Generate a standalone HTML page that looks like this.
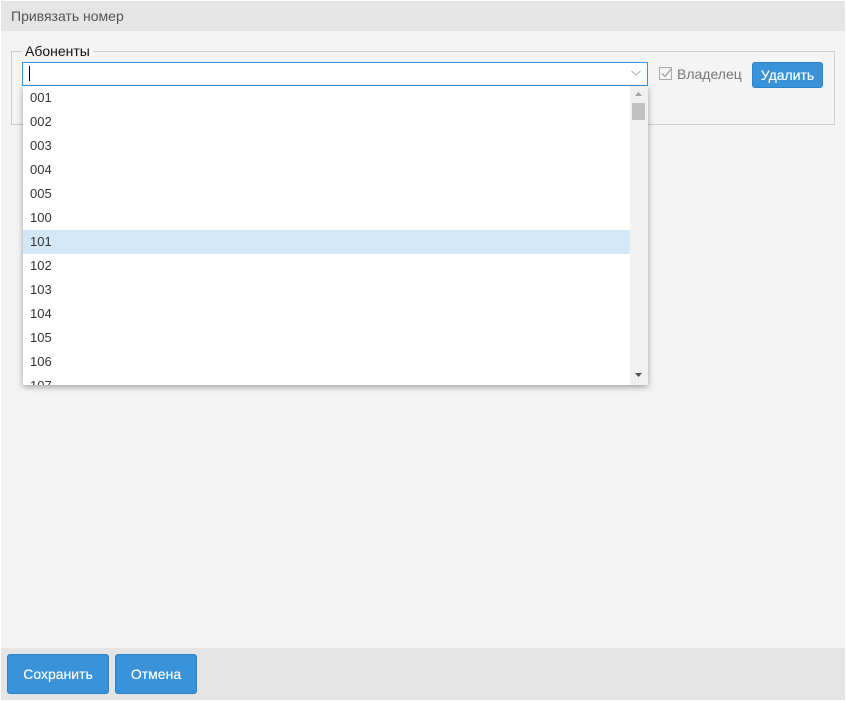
<!DOCTYPE html>
<html><head><meta charset="utf-8">
<style>
html,body{margin:0;padding:0;background:#fff;width:846px;height:701px;overflow:hidden;font-family:"Liberation Sans",sans-serif}
div,span,button{position:absolute;box-sizing:border-box}
#main{left:1px;top:1px;width:844px;height:699px;background:#f4f4f4}
#head{left:1px;top:1px;width:844px;height:30px;background:#e5e5e5;color:#555;font-size:14px;line-height:31px;padding-left:10px}
#fs{left:11px;top:51px;width:824px;height:74px;border:1px solid #ccc}
#leg{left:22px;top:43px;padding:0 3px;background:#f4f4f4;font-size:14px;line-height:16px;color:#111;height:16px}
#inp{left:22px;top:62px;width:626px;height:24px;border:1px solid #3a93d8;background:#fff}
#caret{left:29px;top:66px;width:1px;height:15px;background:#000}
#list{left:23px;top:86px;width:625px;height:299px;background:#fff;overflow:hidden;box-shadow:0 2px 6px rgba(0,0,0,.35)}
.it{left:0;width:607px;height:24px;font-size:13px;line-height:23px;padding-left:7px;color:#333}
#sb{left:607px;top:0;width:18px;height:299px;background:#f1f1f1}
#th{left:2px;top:17px;width:13px;height:17px;background:#c1c1c1}
#cb{left:659px;top:67px;width:13px;height:13px;border:1px solid #aaa;background:#f4f4f4}
#own{left:677px;top:66px;font-size:14px;line-height:17px;color:#777;white-space:nowrap}
.btn{background:#3a92d8;border:1px solid #2b82c9;border-radius:3px;color:#fff;font-family:"Liberation Sans",sans-serif;font-size:14px;text-align:center;padding:0;text-shadow:0 0 .4px #fff}
#foot{left:1px;top:648px;width:844px;height:52px;background:#e5e5e5}
</style></head><body>
<div id="main"></div>
<div id="head">Привязать номер</div>
<div id="fs"></div>
<div id="leg">Абоненты</div>
<div id="inp"></div>
<div id="caret"></div>
<svg style="position:absolute;left:631px;top:70px" width="10" height="7" viewBox="0 0 10 7"><path d="M.5 1L5 5l4.500-4" fill="none" stroke="#aaa" stroke-width="1"/></svg>
<div id="list">
<div class="it" style="top:0">001</div>
<div class="it" style="top:24px">002</div>
<div class="it" style="top:48px">003</div>
<div class="it" style="top:72px">004</div>
<div class="it" style="top:96px">005</div>
<div class="it" style="top:120px">100</div>
<div class="it" style="top:144px;background:#d4e7f6">101</div>
<div class="it" style="top:168px">102</div>
<div class="it" style="top:192px">103</div>
<div class="it" style="top:216px">104</div>
<div class="it" style="top:240px">105</div>
<div class="it" style="top:264px">106</div>
<div class="it" style="top:288px">107</div>
<div id="sb">
<svg style="position:absolute;left:4px;top:5px" width="9" height="6"><path d="M4.500 1L8 5H1z" fill="#a3a3a3"/></svg>
<div id="th"></div>
<svg style="position:absolute;left:4px;top:286px" width="9" height="6"><path d="M1 1h7L4.500 5z" fill="#505050"/></svg>
</div>
</div>
<div id="cb"></div>
<svg style="position:absolute;left:660px;top:68px" width="12" height="11" viewBox="0 0 12 11"><path d="M2 5.500l3 3L11 1" fill="none" stroke="#999" stroke-width="1.2"/></svg>
<div id="own">Владелец</div>
<button class="btn" style="left:752px;top:62px;width:71px;height:26px;line-height:22px">Удалить</button>
<div id="foot"></div>
<button class="btn" style="left:7px;top:654px;width:102px;height:40px">Сохранить</button>
<button class="btn" style="left:115px;top:654px;width:82px;height:40px">Отмена</button>
</body></html>
